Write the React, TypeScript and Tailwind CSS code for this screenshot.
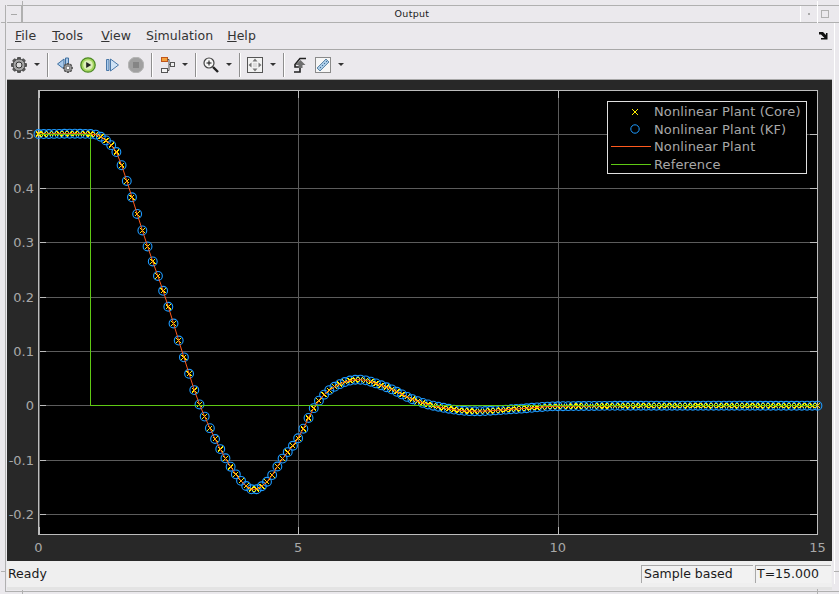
const FONT = "font-['DejaVu_Sans',sans-serif]";

// key points of the response, read off the plot: [t, y]
const KEYS: [number, number][] = [
  [0, 0.5], [1, 0.5], [1.2, 0.495], [1.48, 0.47], [1.62, 0.437], [2.09, 0.296], [2.44, 0.2], [2.83, 0.08], [3.11, 0],
  [3.62, -0.1], [4.08, -0.153], [4.4, -0.14], [4.68, -0.1], [5.0, -0.06], [5.33, 0], [5.65, 0.032], [6.15, 0.048], [6.7, 0.034],
  [7.2, 0.012], [7.6, 0], [8.3, -0.01], [9.2, -0.006], [10, -0.001], [15, 0],
];

function sample(t: number) {
  let i = 0;
  while (i < KEYS.length - 2 && KEYS[i + 1][0] < t) i++;
  const p0 = KEYS[Math.max(i - 1, 0)];
  const p1 = KEYS[i];
  const p2 = KEYS[i + 1];
  const p3 = KEYS[Math.min(i + 2, KEYS.length - 1)];
  const h = p2[0] - p1[0];
  const u = (t - p1[0]) / h;
  const m1 = ((p2[1] - p0[1]) / (p2[0] - p0[0] || 1)) * h;
  const m2 = ((p3[1] - p1[1]) / (p3[0] - p1[0] || 1)) * h;
  const u2 = u * u;
  const u3 = u2 * u;
  return (2 * u3 - 3 * u2 + 1) * p1[1] + (u3 - 2 * u2 + u) * m1 + (-2 * u3 + 3 * u2) * p2[1] + (u3 - u2) * m2;
}

// the chart svg starts at x=7, y=80 of the page
const px = (t: number) => 31.5 + t * 51.93;
const py = (v: number) => 325.7 - v * 543.3;

const TIMES = Array.from({ length: 151 }, (_, i) => i / 10);
const yTicks = [0.5, 0.4, 0.3, 0.2, 0.1, 0, -0.1, -0.2];
const xTicks = [0, 5, 10, 15];

function Chart() {
  const line = TIMES.map((t) => `${px(t).toFixed(1)},${py(sample(t)).toFixed(1)}`).join(" ");
  const right = 810;
  return (
    <svg width="825" height="481" className="block">
      <rect x="31.5" y="10.5" width="779" height="444" fill="#000" />
      {yTicks.map((v) => {
        const y = Math.floor(py(v)) + 0.5;
        return (
          <g key={v}>
            <line x1="32" x2={right} y1={y} y2={y} stroke="#5c5c5c" />
            <line x1="32" x2="39" y1={y} y2={y} stroke="#bdbdbd" />
            <line x1={right - 7} x2={right} y1={y} y2={y} stroke="#bdbdbd" />
            <text x="27" y={y + 4} textAnchor="end" fontSize="13" fill="#a8a8a8" fontFamily="DejaVu Sans">
              {v === 0 ? "0" : v.toFixed(1)}
            </text>
          </g>
        );
      })}
      {xTicks.map((t) => {
        const x = Math.round(px(t)) + 0.5;
        return (
          <g key={t}>
            <line x1={x} x2={x} y1="11" y2="454" stroke="#5c5c5c" />
            <line x1={x} x2={x} y1="11" y2="18" stroke="#bdbdbd" />
            <line x1={x} x2={x} y1="447" y2="454" stroke="#bdbdbd" />
            <text x={px(t)} y="472" textAnchor="middle" fontSize="13" fill="#a8a8a8" fontFamily="DejaVu Sans">
              {t}
            </text>
          </g>
        );
      })}
      <rect x="31.5" y="10.5" width="779" height="444" fill="none" stroke="#bdbdbd" />
      {TIMES.map((t) => (
        <circle key={t} cx={px(t)} cy={py(sample(t))} r="4.4" fill="none" stroke="#1e9bff" strokeWidth="1.1" />
      ))}
      <g shapeRendering="crispEdges">
        {TIMES.map((t) => {
          const x = px(t);
          const y = py(sample(t));
          return (
            <path
              key={t}
              d={`M${x - 2.5} ${y - 2.5}L${x + 2.5} ${y + 2.5}M${x - 2.5} ${y + 2.5}L${x + 2.5} ${y - 2.5}`}
              stroke="#ffee00"
              fill="none"
            />
          );
        })}
      </g>
      <polyline points={line} fill="none" stroke="#ff5a1e" />
      <polyline
        points={`31.5,54.5 83.5,54.5 83.5,325.5 810,325.5`}
        fill="none"
        stroke="#5fc914"
        shapeRendering="crispEdges"
      />
    </svg>
  );
}

function Legend() {
  const rowClass = "flex h-[17.5px] items-center";
  return (
    <div className={`absolute left-[600px] top-[21px] w-[200px] border border-[#e0e0e0] bg-black pl-[3px] pt-[1px] text-[13px] leading-none tracking-[0.12px] text-[#a8a8a8] ${FONT}`}>
      <div className={rowClass}>
        <svg width="43" height="12" className="shrink-0" shapeRendering="crispEdges"><path d="M21 3l6 6M21 9l6-6" stroke="#ffee00" fill="none" /></svg>
        <span className="whitespace-nowrap">Nonlinear Plant (Core)</span>
      </div>
      <div className={rowClass}>
        <svg width="43" height="12" className="shrink-0"><circle cx="24" cy="6" r="4.2" stroke="#1e9bff" fill="none" /></svg>
        <span className="whitespace-nowrap">Nonlinear Plant (KF)</span>
      </div>
      <div className={rowClass}>
        <div className="h-px w-[40px] bg-[#ff5a1e]" />
        <span className="ml-[3px] whitespace-nowrap">Nonlinear Plant</span>
      </div>
      <div className={rowClass}>
        <div className="h-px w-[40px] bg-[#5fc914]" />
        <span className="ml-[3px] whitespace-nowrap">Reference</span>
      </div>
    </div>
  );
}

function Caret() {
  return <span className="ml-[7px] h-0 w-[6px] border-x-[3px] border-t-[3px] border-x-transparent border-t-[#333]" />;
}

function Sep() {
  return <span className="ml-[7px] h-[24px] w-[2px] border-l border-r border-l-[#8f8f8f] border-r-white" />;
}

function Gear({ hole = "#dcdcdc" }: { hole?: string }) {
  const teeth = [0, 45, 90, 135];
  return (
    <>
      {teeth.map((a) => (
        <rect key={a} x="6" y="0" width="4" height="16" rx="1" fill="#555" transform={`rotate(${a} 8 8)`} />
      ))}
      <circle cx="8" cy="8" r="6" fill="#a5a5a5" stroke="#4a4a4a" />
      <circle cx="8" cy="8" r="3" fill={hole} stroke="#333" />
    </>
  );
}

function Toolbar() {
  return (
    <div className="flex h-[30px] items-center border-b border-[#a8a8a8] pl-[4px]">
      <svg width="16" height="16" viewBox="0 0 16 16"><Gear /></svg>
      <Caret />
      <Sep />
      {/* step back */}
      <svg width="16" height="16" viewBox="0 0 16 16" className="ml-[8px]">
        <path d="M7 2v10L0.5 7z" fill="#a9c9ea" stroke="#3f6f9f" />
        <path d="M8.5 1h3v7h-3z" fill="#a9c9ea" stroke="#3f6f9f" />
        <g transform="translate(6 6) scale(0.62)"><Gear hole="#fff" /></g>
      </svg>
      {/* run */}
      <svg width="16" height="16" viewBox="0 0 16 16" className="ml-[7px]">
        <circle cx="8" cy="8" r="7.2" fill="#a5d65f" stroke="#4c8a24" strokeWidth="1.3" />
        <circle cx="8" cy="8" r="4.8" fill="#dcefb9" />
        <path d="M6.2 5v6l5-3z" fill="#222" />
      </svg>
      {/* step forward */}
      <svg width="13" height="14" viewBox="0 0 13 14" className="ml-[10px]">
        <path d="M0.5 1.5h2.5v11H0.5z" fill="#a9c9ea" stroke="#4a78a8" />
        <path d="M4.5 1v12l8-6z" fill="#cfe2f5" stroke="#4a78a8" />
      </svg>
      {/* stop */}
      <svg width="16" height="16" viewBox="0 0 16 16" className="ml-[9px]">
        <circle cx="8" cy="8" r="7.8" fill="#a0a0a0" stroke="#b5b5b5" />
        <rect x="5" y="5" width="6" height="6" fill="#858585" />
      </svg>
      <Sep />
      {/* model hierarchy */}
      <svg width="16" height="16" viewBox="0 0 16 16" className="ml-[6px]">
        <rect x="2.5" y="0.5" width="6" height="4" fill="#f4a23c" stroke="#c0561c" />
        <rect x="2.5" y="11.5" width="6" height="4" fill="#f4f4f4" stroke="#555" />
        <rect x="11.5" y="5.5" width="4" height="4" fill="#eee" stroke="#555" />
        <path d="M8.5 2.5h1.5v5h1.5M8.5 13.5h1.5v-6" fill="none" stroke="#555" />
      </svg>
      <Caret />
      <Sep />
      {/* zoom */}
      <svg width="16" height="16" viewBox="0 0 16 16" className="ml-[6px]">
        <circle cx="6" cy="6" r="5" fill="#f6f6f6" stroke="#444" strokeWidth="1.2" />
        <path d="M3.5 6h5M6 3.5v5" stroke="#111" />
        <path d="M10 10l5 5" stroke="#222" strokeWidth="2.4" />
      </svg>
      <Caret />
      <Sep />
      {/* fit to view */}
      <svg width="16" height="16" viewBox="0 0 16 16" className="ml-[6px]">
        <rect x="0.5" y="0.5" width="15" height="15" fill="#f2f2f2" stroke="#555" />
        <path d="M8 1.5l2.5 3h-5zM8 14.5l2.5-3h-5zM1.5 8l3-2.5v5zM14.5 8l-3-2.5v5z" fill="#777" />
        <rect x="6" y="6" width="4" height="4" fill="#ddd" />
      </svg>
      <Caret />
      <Sep />
      {/* highlight: arrow over a stepped signal line */}
      <svg width="14" height="16" viewBox="0 0 14 16" className="ml-[8px]">
        <path d="M1 15h6v-5H2V7.500L7 1.500h6" fill="none" stroke="#222" strokeWidth="1.6" />
        <path d="M7.500 3l5 5h-3v3h-4V8h-3z" fill="#6e6e6e" />
      </svg>
      {/* ruler */}
      <svg width="16" height="16" viewBox="0 0 16 16" className="ml-[8px]">
        <rect x="0.5" y="0.5" width="15" height="15" fill="#f6f6f6" stroke="#8a8a8a" />
        <path d="M2 11L11 2l3 3-9 9z" fill="#a9cbe6" stroke="#5f87a8" />
        <path d="M5 10l1 1M7 8l1 1M9 6l1 1M11 4l1 1" stroke="#3f6f9f" />
      </svg>
      <Caret />
    </div>
  );
}

function FrameMarks() {
  return (
    <>
      {/* window frame pieces: left/right edges and the resize handles */}
      <div className="absolute bottom-[2px] left-[5px] top-[5px] w-px bg-[#b0b0b0]" />
      <div className="absolute bottom-[2px] left-[5px] right-0 h-px bg-[#b0b0b0]" />
      <div className="absolute right-0 top-[5px] h-px w-[8px] bg-[#b0b0b0]" />
      <div className="absolute bottom-[10px] right-[4px] top-[23px] w-px bg-white" />
      <div className="absolute left-[22px] top-[1px] h-[22px] w-px bg-[#b0b0b0]" />
      <div className="absolute left-[1px] top-[22px] h-px w-[5px] bg-[#b0b0b0]" />
      <div className="absolute left-[1px] top-[571px] h-px w-[5px] bg-[#b0b0b0]" />
      <div className="absolute bottom-0 left-[22px] h-[4px] w-px bg-[#b0b0b0]" />
      <div className="absolute right-0 top-[571px] h-px w-[5px] bg-[#b0b0b0]" />
      <div className="absolute bottom-0 left-[817px] h-[5px] w-px bg-[#b0b0b0]" />
      <div className="absolute left-[817px] top-[1px] h-[22px] w-px bg-white" />
      <div className="absolute right-0 top-[22px] h-px w-[8px] bg-[#b0b0b0]" />
    </>
  );
}

export default function App() {
  const menus = [
    { pre: "", u: "F", rest: "ile", gap: "mr-[16px]" },
    { pre: "", u: "T", rest: "ools", gap: "mr-[18px]" },
    { pre: "", u: "V", rest: "iew", gap: "mr-[15px]" },
    { pre: "S", u: "i", rest: "mulation", gap: "mr-[14px]" },
    { pre: "", u: "H", rest: "elp", gap: "" },
  ];
  return (
    <div className={`relative flex h-[594px] w-[839px] flex-col overflow-hidden bg-[#ebe9ed] pl-[7px] pr-[7px] pt-[5px] text-[12.5px] text-[#1a1a1a] ${FONT}`}>
      <FrameMarks />

      {/* title bar */}
      <div className="flex h-[18px] items-stretch border-y border-[#b0b0b0]">
        <div className="flex w-[15px] items-center justify-center border-r border-[#b0b0b0]">
          <span className="h-px w-[6px] bg-[#a8a8a8]" />
        </div>
        <div className="flex flex-1 items-center justify-center pl-[2px] text-[9.5px] tracking-[0.3px]">Output</div>
        <div className="flex w-[17px] items-center justify-center border-l border-white">
          <span className="h-[2px] w-[2px] bg-[#aaa]" />
        </div>
        <div className="flex w-[15px] items-center justify-center border-l border-white">
          <span className="h-[8px] w-[8px] border border-[#b0b0b0]" />
        </div>
      </div>

      {/* menu bar */}
      <div className="flex h-[27px] items-center border-b border-[#a8a8a8] pl-[8px]">
        {menus.map((m) => (
          <span key={m.rest} className={`${m.gap} tracking-[0.05px] text-[#333]`}>
            {m.pre}
            <span className="underline">{m.u}</span>
            {m.rest}
          </span>
        ))}
        <svg width="9" height="8" viewBox="0 0 9 8" className="ml-auto mr-[4px]">
          <path d="M0 0h4l3 3V1h1.500v6.500H2V6h3.500L2 2.500H0z" fill="#111" />
        </svg>
      </div>

      <Toolbar />

      {/* plot panel */}
      <div className="relative h-[481px] w-[825px] bg-[#282828]">
        <Chart />
        <Legend />
      </div>

      {/* status bar */}
      <div className="flex h-[26px] items-stretch bg-[#efefef]">
        <div className="flex flex-1 items-center pl-[1px]">Ready</div>
        <div className="my-[4px] flex w-[112px] items-center border-l border-t border-[#a8a8a8] bg-[#f2f2f2] pl-[2px]">Sample based</div>
        <div className="my-[4px] ml-[2px] mr-[1px] flex w-[76px] items-center border-l border-t border-[#a8a8a8] bg-[#f2f2f2] pl-[1px]">T=15.000</div>
      </div>
      <div className="h-[3px] bg-[#e3e3e3]" />
    </div>
  );
}
